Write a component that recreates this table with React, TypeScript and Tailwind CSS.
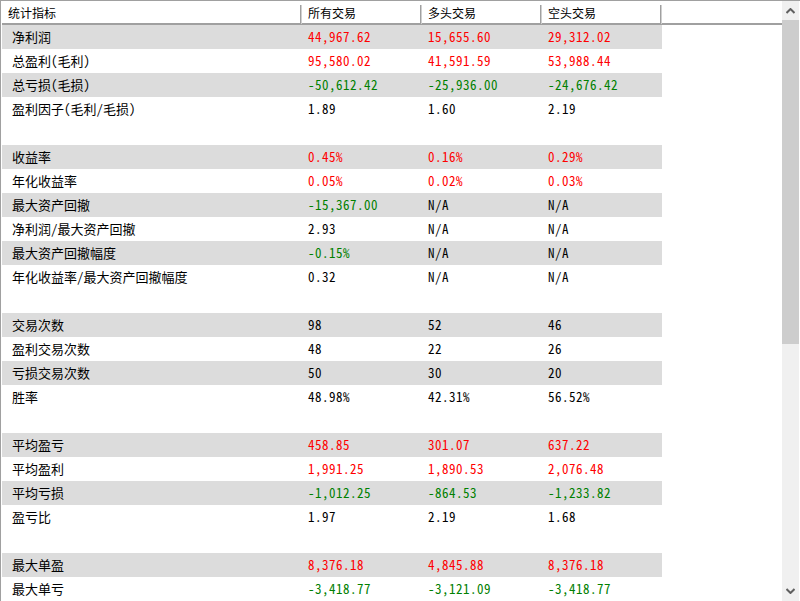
import React from "react";

type V = { t: string; c: "r" | "g" | "k" };

const r = (t: string): V => ({ t, c: "r" });
const g = (t: string): V => ({ t, c: "g" });
const k = (t: string): V => ({ t, c: "k" });

const groups: { label: string; vals: V[] }[][] = [
  [
    { label: "净利润", vals: [r("44,967.62"), r("15,655.60"), r("29,312.02")] },
    { label: "总盈利(毛利)", vals: [r("95,580.02"), r("41,591.59"), r("53,988.44")] },
    { label: "总亏损(毛损)", vals: [g("-50,612.42"), g("-25,936.00"), g("-24,676.42")] },
    { label: "盈利因子(毛利/毛损)", vals: [k("1.89"), k("1.60"), k("2.19")] },
  ],
  [
    { label: "收益率", vals: [r("0.45%"), r("0.16%"), r("0.29%")] },
    { label: "年化收益率", vals: [r("0.05%"), r("0.02%"), r("0.03%")] },
    { label: "最大资产回撤", vals: [g("-15,367.00"), k("N/A"), k("N/A")] },
    { label: "净利润/最大资产回撤", vals: [k("2.93"), k("N/A"), k("N/A")] },
    { label: "最大资产回撤幅度", vals: [g("-0.15%"), k("N/A"), k("N/A")] },
    { label: "年化收益率/最大资产回撤幅度", vals: [k("0.32"), k("N/A"), k("N/A")] },
  ],
  [
    { label: "交易次数", vals: [k("98"), k("52"), k("46")] },
    { label: "盈利交易次数", vals: [k("48"), k("22"), k("26")] },
    { label: "亏损交易次数", vals: [k("50"), k("30"), k("20")] },
    { label: "胜率", vals: [k("48.98%"), k("42.31%"), k("56.52%")] },
  ],
  [
    { label: "平均盈亏", vals: [r("458.85"), r("301.07"), r("637.22")] },
    { label: "平均盈利", vals: [r("1,991.25"), r("1,890.53"), r("2,076.48")] },
    { label: "平均亏损", vals: [g("-1,012.25"), g("-864.53"), g("-1,233.82")] },
    { label: "盈亏比", vals: [k("1.97"), k("2.19"), k("1.68")] },
  ],
  [
    { label: "最大单盈", vals: [r("8,376.18"), r("4,845.88"), r("8,376.18")] },
    { label: "最大单亏", vals: [g("-3,418.77"), g("-3,121.09"), g("-3,418.77")] },
  ],
];

const colorCls = { r: "text-[#ff0000]", g: "text-[#008000]", k: "text-black" };

const mono = { fontFamily: "'Noto Sans Mono CJK SC', 'Noto Sans CJK SC', 'Liberation Mono', monospace" };

function DataRow({ row, shaded }: { row: { label: string; vals: V[] }; shaded: boolean }) {
  return (
    <div className="flex h-[24px] items-center">
      <div className={`flex h-full w-[660px] items-center text-[13px] ${shaded ? "bg-[#dcdcdc]" : "bg-white"}`} style={mono}>
        <div className="w-[300px] pl-[10px] text-black whitespace-nowrap">{row.label}</div>
        {row.vals.map((v, i) => (
          <div key={i} className={`w-[120px] pl-[6px] tracking-[0.5px] whitespace-nowrap ${colorCls[v.c]}`}>
            {v.t}
          </div>
        ))}
      </div>
    </div>
  );
}

export default function App() {
  const rows: React.ReactNode[] = [];
  groups.forEach((grp, gi) => {
    grp.forEach((row, i) => {
      rows.push(<DataRow key={`${gi}-${i}`} row={row} shaded={i % 2 === 0} />);
    });
    if (gi < groups.length - 1) rows.push(<div key={`b${gi}`} className="h-[24px] bg-white" />);
  });

  const head = ["统计指标", "所有交易", "多头交易", "空头交易"];
  const headW = ["w-[300px]", "w-[120px]", "w-[120px]", "w-[120px]"];

  return (
    <div className="w-[800px] h-[601px] overflow-hidden bg-white border-t border-l border-[#a0a0a0] flex">
      <div className="w-[781px] pl-[1px] flex flex-col">
        <div className="h-[24px] flex border-b-2 border-[#a0a0a0] bg-white" style={{ fontFamily: "'Noto Sans CJK SC', 'Noto Sans', sans-serif" }}>
          {head.map((h, i) => (
            <div key={i} className={`${headW[i]} h-full flex items-center pt-[1px]`}>
              <div className="flex-1 pl-[6px] text-[12px] text-black whitespace-nowrap">{h}</div>
              <div className="w-[2px] h-[19px] mt-[3px] bg-[#a0a0a0] border-r border-[#d0d0d0]" />
            </div>
          ))}
          <div className="flex-1" />
        </div>
        <div className="flex-1 overflow-hidden">{rows}</div>
      </div>
      <div className="w-[17px] h-full bg-[#f0f0f0] flex flex-col items-center">
        <div className="h-[19px] w-full flex items-center justify-center">
          <svg width="9" height="6" viewBox="0 0 9 6">
            <path d="M0.5 5 L4.5 1 L8.5 5" stroke="#606060" strokeWidth="2" fill="none" />
          </svg>
        </div>
        <div className="w-full h-[324px] bg-[#cdcdcd]" />
        <div className="flex-1" />
        <div className="h-[19px] w-full flex items-center justify-center mb-[1px]">
          <svg width="9" height="6" viewBox="0 0 9 6">
            <path d="M0.5 1 L4.5 5 L8.5 1" stroke="#606060" strokeWidth="2" fill="none" />
          </svg>
        </div>
      </div>
    </div>
  );
}
